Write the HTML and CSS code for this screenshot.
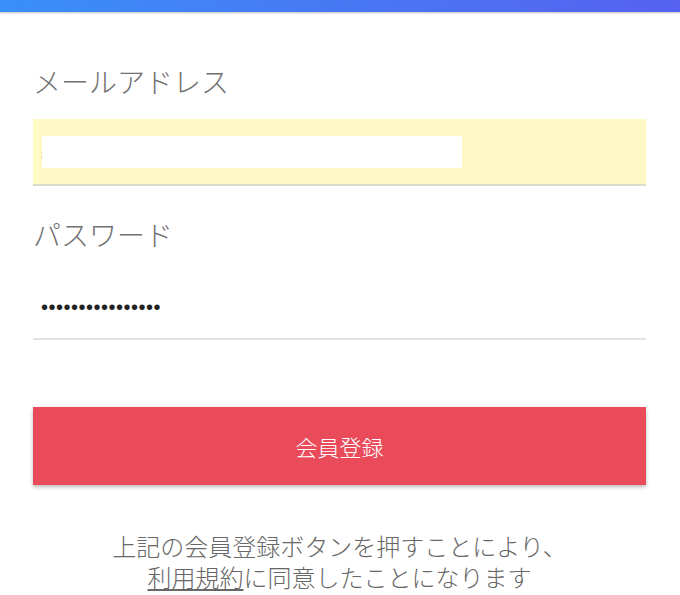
FILE: index.html
```html
<!DOCTYPE html>
<html lang="ja">

<head>
    <meta charset="UTF-8">
    <meta name="viewport" content="width=device-width, initial-scale=1.0">
    <title>会員登録</title>
    <link rel="stylesheet" href="styles.css">
</head>

<body>
    <div class="topbar"></div>
    <form class="form" action="javascript:;">
        <label class="label" for="email">メールアドレス</label>
        <div class="field">
            <input class="input input_auto" id="email" type="email" value="sample@example.com" readonly>
            <!-- 伏せ字 -->
            <span class="mask"></span>
        </div>

        <label class="label label_pw" for="pw">パスワード</label>
        <div class="field">
            <input class="input" id="pw" type="password" value="password12345678" readonly>
        </div>

        <button class="submit" type="button">会員登録</button>

        <p class="note">上記の会員登録ボタンを押すことにより、<br><a href="javascript:;">利用規約</a>に同意したことになります</p>
    </form>
</body>

</html>
```
FILE: styles.css
```css
* {
    padding: 0;
    margin: 0;
    box-sizing: border-box;
}

body {
    background-color: #fff;
    font-family: "Noto Sans CJK JP", "Noto Sans", sans-serif;
}

a {
    color: inherit;
}

.topbar {
    height: 12px;
    background: linear-gradient(to right, #3a8ff9, #5661f0);
    box-shadow: 0 1px 2px rgba(0, 0, 0, .25);
}

.form {
    display: flex;
    flex-direction: column;
    padding: 49px 34px 0 33px;
}

.label {
    font-size: 28px;
    font-weight: 300;
    line-height: 40px;
    color: #717171;
}

.label_pw {
    margin-top: 28px;
}

.field {
    position: relative;
    margin-top: 18px;
}

.label_pw + .field {
    margin-top: 19px;
}

.input {
    display: block;
    width: 100%;
    height: 67px;
    padding: 3px 8px 0;
    border: none;
    border-bottom: 2px solid #e2e2e2;
    outline: none;
    background-color: #fff;
    font-family: "Liberation Sans", sans-serif;
    font-size: 20px;
    letter-spacing: 0.5px;
    color: #222;
}

.input_auto {
    background-color: #fef9c5;
    border-bottom-color: #dcdbcc;
}

.mask {
    position: absolute;
    top: 17px;
    left: 9px;
    width: 420px;
    height: 32px;
    background-color: #fff;
}

.submit {
    height: 78px;
    margin-top: 67px;
    border: none;
    background-color: #e94b5b;
    color: #fff;
    font-family: inherit;
    font-size: 22px;
    font-weight: 300;
    box-shadow: 0 2px 4px rgba(0, 0, 0, .28);
    cursor: pointer;
}

/* 行間が狭いので欧文フォントを先に置いて行の高さを抑える */
.note {
    margin-top: 47px;
    text-align: center;
    font-family: "Liberation Sans", "Noto Sans CJK JP", sans-serif;
    font-size: 24px;
    font-weight: 300;
    line-height: 31px;
    color: #686868;
}
```
